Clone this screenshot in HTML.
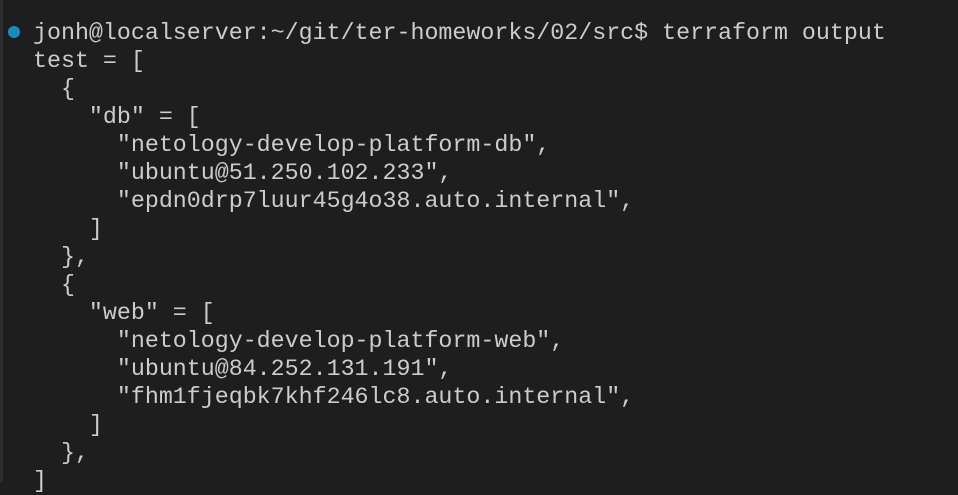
<!DOCTYPE html>
<html><head><style>
html,body{margin:0;padding:0;width:958px;height:482px;overflow:hidden;background:#1e1e1e;}
.bar{position:absolute;left:0;top:0;width:3px;height:482px;background:#2d2d2d;}
.dot{position:absolute;left:8px;top:26px;width:12px;height:12px;border-radius:50%;background:#1f88bd;}
pre{position:absolute;left:33px;top:19px;margin:0;font-family:"Liberation Mono",monospace;font-size:23.3px;line-height:28px;color:#cccccc;}
</style></head><body>
<div class="bar"></div><div class="dot"></div>
<pre>jonh@localserver:~/git/ter-homeworks/02/src$ terraform output
test = [
  {
    "db" = [
      "netology-develop-platform-db",
      "ubuntu@51.250.102.233",
      "epdn0drp7luur45g4o38.auto.internal",
    ]
  },
  {
    "web" = [
      "netology-develop-platform-web",
      "ubuntu@84.252.131.191",
      "fhm1fjeqbk7khf246lc8.auto.internal",
    ]
  },
]</pre>
</body></html>
